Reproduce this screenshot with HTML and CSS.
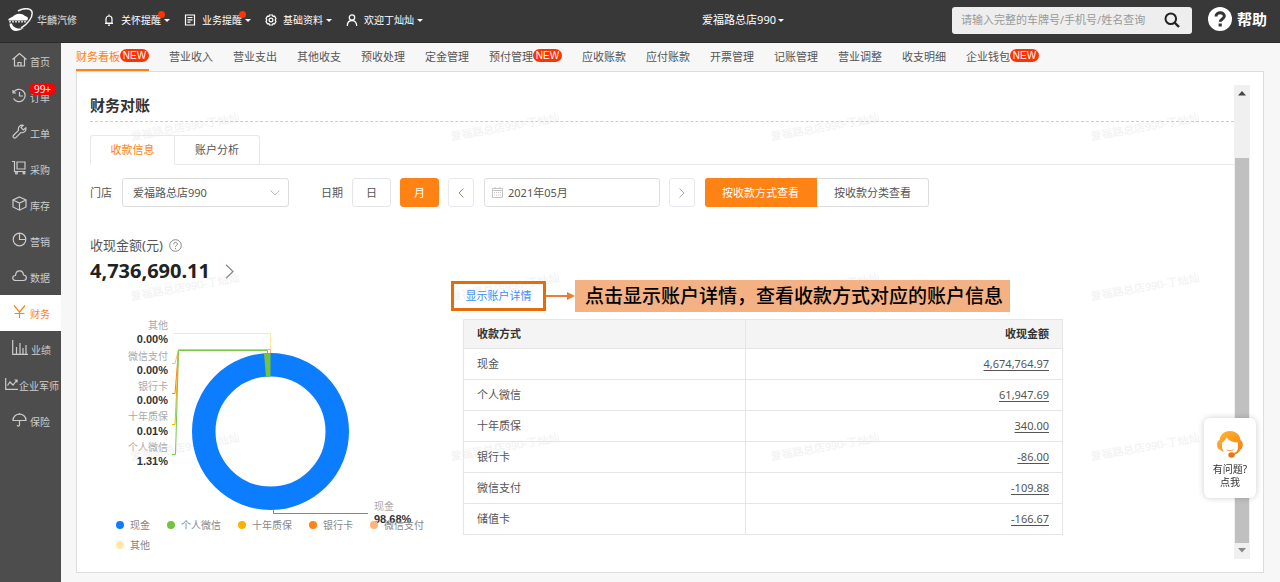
FILE: index.html
```
<!DOCTYPE html>
<html lang="zh-CN">
<head>
<meta charset="utf-8">
<title>财务看板</title>
<link rel="stylesheet" href="styles.css">
</head>
<body>
<header class="topbar">
  <a class="logo" href="#">
    <svg width="26" height="24" viewBox="0 0 26 24" fill="none">
      <path d="M10 3C16-.5 23 0 24 4c1 5-4 12-11 16" stroke="#f2f2f2" stroke-width="1.500"/>
      <path d="M0 12c1-2 3-2.500 5-3.500C8 5 14 5 17 8c2 .5 3 1 3 3l-1 1.500H1z" fill="#fff"/>
      <path d="M1 13.800h18" stroke="#ccc" stroke-width="1.400" stroke-dasharray="2 1"/>
      <path d="M1.500 15.500C2 23.500 8 25 16 20c-6 1.500-11 0-12-4.500z" fill="#fff"/>
    </svg>
    <span>华麟汽修</span>
  </a>
  <nav class="topmenu">
    <button class="menu-item" type="button">
      <svg width="12" height="12" viewBox="0 0 12 12" fill="none" stroke="#fff" stroke-width="1.200"><path d="M3 9V5a3 3 0 0 1 6 0v4zM2 9.500h8M5 11.200h2M6 .5v1.500"/></svg>
      <span class="menu-text">关怀提醒<i class="dot"></i></span><i class="caret"></i>
    </button>
    <button class="menu-item" type="button">
      <svg width="12" height="12" viewBox="0 0 12 12" fill="none" stroke="#fff" stroke-width="1.200"><path d="M1.500 1h9v10h-9zM3.500 3.500h5M3.500 5.800h5M3.500 8.200h3M1.500 1v10"/></svg>
      <span class="menu-text">业务提醒<i class="dot"></i></span><i class="caret"></i>
    </button>
    <button class="menu-item" type="button">
      <svg width="12" height="12" viewBox="0 0 12 12" fill="none" stroke="#fff" stroke-width="1.200"><path d="M4.500 1h3l.5 1.300 1.600-.2 1.400 2.500L10.200 6l.8 1.400-1.400 2.500-1.600-.2L7.500 11h-3L4 9.700l-1.600.2L1 7.400 1.800 6 1 4.600l1.400-2.500 1.600.2z"/><circle cx="6" cy="6" r="1.900"/></svg>
      <span class="menu-text">基础资料</span><i class="caret"></i>
    </button>
    <button class="menu-item" type="button">
      <svg width="12" height="12" viewBox="0 0 12 12" fill="none" stroke="#fff" stroke-width="1.300"><circle cx="6" cy="3.500" r="2.700"/><path d="M1.300 12c0-3.500 2-5.500 4.700-5.500s4.700 2 4.700 5.500"/></svg>
      <span class="menu-text">欢迎丁灿灿</span><i class="caret"></i>
    </button>
  </nav>
  <button class="store" type="button">爱福路总店990<i class="caret"></i></button>
  <form class="search">
    <input type="text" aria-label="查询" placeholder="请输入完整的车牌号/手机号/姓名查询">
    <button type="button" aria-label="搜索"><svg width="16" height="16" viewBox="0 0 16 16" fill="none" stroke="#222" stroke-width="2"><circle cx="6.800" cy="6.800" r="5.300"/><path d="M10.500 10.500l4.500 4.500" stroke-width="2.400"/></svg></button>
  </form>
  <a class="help" href="#">
    <svg width="24" height="24" viewBox="0 0 24 24"><circle cx="12" cy="12" r="12" fill="#fff"/><path d="M8 9.500C8 4.500 16.500 4.800 16.300 9.200 16.200 12 12.300 11.800 12.200 14.800" fill="none" stroke="#333" stroke-width="3"/><path d="M10.600 16.500h3.200v3h-3.200z" fill="#333"/></svg>
    <span>帮助</span>
  </a>
</header>
<div class="shell">
  <nav class="side">
    <a href="#"><svg width="15" height="15" viewBox="0 0 15 15"><path d="M.5 7.500l7-6 7 6M2.500 6.500v7.500h10V6.500M6 14v-3.500h3V14"/></svg><span>首页</span></a>
    <a href="#"><svg width="15" height="15" viewBox="0 0 15 15"><path d="M1.500 4.500a6.200 6.200 0 1 1 0 6M1 2v3h3M7.500 4v4h3.500"/></svg><span>订单</span><b class="count">99+</b></a>
    <a href="#"><svg width="15" height="15" viewBox="0 0 15 15"><path d="M1.300 11.500l5.200-5.200c-.8-3 1.500-5.800 4.700-5L9 3.600 11.300 6l2.500-2.200c.8 3-2 5.500-5 4.800l-5.100 5.200c-1.500 1-3.300-.8-2.400-2.300z"/></svg><span>工单</span></a>
    <a href="#"><svg width="15" height="15" viewBox="0 0 15 15"><path d="M0 1.500h2.500v10h11M5 2h8v7H5z"/><circle cx="4.500" cy="13" r="1"/><circle cx="12" cy="13" r="1"/></svg><span>采购</span></a>
    <a href="#"><svg width="15" height="15" viewBox="0 0 15 15"><path d="M7.500 1L14 4v7l-6.500 3.200L1 11V4zM1 4l6.500 3L14 4M7.500 7v7"/></svg><span>库存</span></a>
    <a href="#"><svg width="15" height="15" viewBox="0 0 15 15"><circle cx="7.500" cy="7.500" r="6.300"/><path d="M7.500 1v6.500h6"/></svg><span>营销</span></a>
    <a href="#"><svg width="15" height="15" viewBox="0 0 15 15"><path d="M4 12.500C-.5 12.500 0 7.500 3.500 7.500 4 1.500 11 1.500 11.500 7c3.800.3 3.800 5.500 0 5.500z"/></svg><span>数据</span></a>
    <a href="#" class="on"><svg width="15" height="15" viewBox="0 0 15 15"><path d="M2 1.500l5.500 6.500L13 1.500M7.500 8v6M2.500 9.500h10"/></svg><span>财务</span></a>
    <a href="#"><svg width="16" height="15" viewBox="0 0 16 15"><path d="M.7 0v14.300H16M4.500 7v7M8 3v11M11 8v6M14 5v9"/></svg><span>业绩</span></a>
    <a href="#" class="wide"><svg width="13" height="15" viewBox="0 0 13 15"><path d="M.7 2v11.300H13M2.500 9.500L5 6l3 3 4-5M9.500 4H12v2.500"/></svg><span>企业军师</span></a>
    <a href="#"><svg width="15" height="15" viewBox="0 0 15 15"><path d="M1 8.500C1 0 14 0 14 8.500zM7.500 8.500V13c0 1.500-2.200 1.500-2.200 0M7.500 1v1.500"/></svg><span>保险</span></a>
  </nav>
  <main class="main">
    <nav class="tabs">
      <a href="#" class="on">财务看板<b>NEW</b></a>
      <a href="#">营业收入</a>
      <a href="#">营业支出</a>
      <a href="#">其他收支</a>
      <a href="#">预收处理</a>
      <a href="#">定金管理</a>
      <a href="#">预付管理<b>NEW</b></a>
      <a href="#">应收账款</a>
      <a href="#">应付账款</a>
      <a href="#">开票管理</a>
      <a href="#">记账管理</a>
      <a href="#">营业调整</a>
      <a href="#">收支明细</a>
      <a href="#">企业钱包<b>NEW</b></a>
    </nav>
    <section class="panel">
      <div class="content">
        <div class="marks" aria-hidden="true">
          <span>爱福路总店990-丁灿灿</span><span>爱福路总店990-丁灿灿</span><span>爱福路总店990-丁灿灿</span><span>爱福路总店990-丁灿灿</span>
          <span>爱福路总店990-丁灿灿</span><span>爱福路总店990-丁灿灿</span><span>爱福路总店990-丁灿灿</span><span>爱福路总店990-丁灿灿</span>
          <span>爱福路总店990-丁灿灿</span><span>爱福路总店990-丁灿灿</span><span>爱福路总店990-丁灿灿</span><span>爱福路总店990-丁灿灿</span>
        </div>
        <h1>财务对账</h1>
        <div class="subtabs">
          <button type="button" class="on">收款信息</button>
          <button type="button">账户分析</button>
        </div>
        <form class="filters">
          <label for="shop">门店</label>
          <div class="select">
            <select id="shop"><option>爱福路总店990</option></select>
            <svg width="10" height="6" viewBox="0 0 10 6" fill="none" stroke="#bbb"><path d="M.5.5L5 5 9.500.5"/></svg>
          </div>
          <label for="month" class="date-label">日期</label>
          <button type="button" class="unit">日</button>
          <button type="button" class="unit on">月</button>
          <button type="button" class="step" aria-label="上月"><svg width="6" height="10" viewBox="0 0 6 10" fill="none" stroke="#888"><path d="M5.500.5L1 5l4.500 4.500"/></svg></button>
          <div class="date">
            <svg width="11" height="11" viewBox="0 0 11 11" fill="none" stroke="#c4c4c4"><path d="M.5 1.500h10v9H.5zM.5 3.500h10M3 0v2M8 0v2"/><path d="M2 5.500h7M2 8h7" stroke-dasharray="1 1"/></svg>
            <input id="month" type="text" value="2021年05月">
          </div>
          <button type="button" class="step" aria-label="下月"><svg width="6" height="10" viewBox="0 0 6 10" fill="none" stroke="#aaa"><path d="M.5.5L5 5 .5 9.500"/></svg></button>
          <div class="modes">
            <button type="button" class="on">按收款方式查看</button>
            <button type="button">按收款分类查看</button>
          </div>
        </form>
        <div class="total-label">收现金额(元)
          <svg width="13" height="13" viewBox="0 0 13 13" fill="none" stroke="#888"><circle cx="6.500" cy="6.500" r="5.800"/><path d="M4.700 5.200c0-2.500 3.700-2.400 3.700-.1 0 1.500-1.900 1.300-1.900 3M6.500 9v1.200"/></svg>
        </div>
        <div class="total">4,736,690.11
          <svg width="9" height="15" viewBox="0 0 9 15" fill="none" stroke="#888" stroke-width="1.200"><path d="M1 .7l7 6.800-7 6.800"/></svg>
        </div>
        <div class="report">
          <div class="chart">
            <svg class="donut" viewBox="0 0 361 200" role="img" aria-label="收款方式占比">
              <circle cx="180.500" cy="116.500" r="66.750" fill="none" stroke="#0d7dff" stroke-width="23.500"/>
              <path d="M174 38.300L180.500 38V61.500L176 61.700z" fill="#73c341"/>
              <g fill="none">
                <path d="M83 18.500h97.500V38" stroke="#ffe9a8"/>
                <path d="M82 48.500h3L88.500 34.500h92V38" stroke="#ffb47a"/>
                <path d="M82 78.500h3L88.500 35" stroke="#ff8214"/>
                <path d="M82 109.500h3L88.500 35" stroke="#fab400"/>
                <path d="M82 139.500h3.500L88.500 35.500h89V38" stroke="#7cc84b"/>
                <path d="M183.500 195v3.500H278" stroke="#3d95ff"/>
              </g>
              <g class="name" text-anchor="end">
                <text x="78" y="14">其他</text>
                <text x="78" y="45">微信支付</text>
                <text x="78" y="75">银行卡</text>
                <text x="78" y="105">十年质保</text>
                <text x="78" y="136">个人微信</text>
              </g>
              <g class="share" text-anchor="end">
                <text x="78" y="28">0.00%</text>
                <text x="78" y="59">0.00%</text>
                <text x="78" y="89">0.00%</text>
                <text x="78" y="120">0.01%</text>
                <text x="78" y="150">1.31%</text>
              </g>
              <text class="name" x="284" y="195">现金</text>
              <text class="share" x="284" y="208">98.68%</text>
            </svg>
            <ul class="legend">
              <li class="cash">现金</li>
              <li class="wechat">个人微信</li>
              <li class="warranty">十年质保</li>
              <li class="card">银行卡</li>
              <li class="wxpay">微信支付</li>
              <li class="other">其他</li>
            </ul>
          </div>
          <div class="detail">
            <div class="callout">
              <a href="#" class="show">显示账户详情</a>
              <svg width="29" height="10" viewBox="0 0 29 10"><path d="M0 5h22" stroke="#ed7d31" stroke-width="2"/><path d="M21 1l8 4-8 4z" fill="#ed7d31"/></svg>
              <p>点击显示账户详情，查看收款方式对应的账户信息</p>
            </div>
            <table>
              <thead><tr><th>收款方式</th><th>收现金额</th></tr></thead>
              <tbody>
                <tr><td>现金</td><td><a href="#">4,674,764.97</a></td></tr>
                <tr><td>个人微信</td><td><a href="#">61,947.69</a></td></tr>
                <tr><td>十年质保</td><td><a href="#">340.00</a></td></tr>
                <tr><td>银行卡</td><td><a href="#">-86.00</a></td></tr>
                <tr><td>微信支付</td><td><a href="#">-109.88</a></td></tr>
                <tr><td>储值卡</td><td><a href="#">-166.67</a></td></tr>
              </tbody>
            </table>
          </div>
        </div>
      </div>
      <div class="scroll" aria-hidden="true">
        <svg width="8" height="5" viewBox="0 0 8 5"><path d="M0 4.500L4 0l4 4.500z" fill="#444"/></svg>
        <div class="thumb"></div>
        <svg width="8" height="5" viewBox="0 0 8 5"><path d="M0 0h8L4 4.500z" fill="#888"/></svg>
      </div>
    </section>
  </main>
</div>
<a class="ask" href="#">
  <svg width="28" height="28" viewBox="0 0 28 28">
    <defs><linearGradient id="hair" x1="0" y1="0" x2="1" y2="1"><stop offset="0" stop-color="#ffb935"/><stop offset="1" stop-color="#f97a0c"/></linearGradient></defs>
    <path d="M3.500 10C5-2 23-2 24.500 10c3 1.500 3 8 0 9.500-1 2.500-3.500 5-8 5.500v-1.500c3-.5 5.500-2.500 5.500-6V12.500c-5 0-9-1.500-11.500-5C9.500 10 8 11.500 6 12.500V16c0 2 .5 4 2 6-2-.5-3-1.500-4-2.500C.2 18.500 0 11.500 3.500 10z" fill="url(#hair)"/>
    <path d="M10.500 19.500c1.500 1.500 5 1.500 7 0" fill="none" stroke="#f9a040"/>
    <ellipse cx="15.500" cy="25" rx="3.200" ry="2.700" fill="#f4700c"/>
  </svg>
  <span>有问题?<br>点我</span>
</a>
</body>
</html>
```
FILE: styles.css
```
* { box-sizing: border-box; }
body {
  margin: 0;
  min-height: 100vh;
  display: flex;
  flex-direction: column;
  background: #f7f7f7;
  color: #555;
  font: 11px/16px "Noto Sans", "Noto Sans CJK SC", sans-serif;
}
a { color: inherit; text-decoration: none; }
button, input, select { font: inherit; color: inherit; margin: 0; }
button { background: none; border: 0; padding: 0; cursor: pointer; }
svg { flex: none; display: block; }

/* top bar */
.topbar {
  display: flex;
  align-items: center;
  height: 43px;
  padding: 0 13px 2px 8px;
  background: #383838;
  border-bottom: 1px solid #2b2b2b;
  color: #fff;
}
.logo { display: flex; align-items: center; gap: 3px; font-size: 10px; font-weight: 500; color: #ccc; }
.topmenu { display: flex; gap: 14px; margin-left: 26px; }
.menu-item { display: flex; align-items: center; font-size: 10px; }
.menu-text { position: relative; margin: 0 3px 0 6px; white-space: nowrap; }
.dot { position: absolute; top: -1px; right: -4px; width: 7px; height: 7px; border-radius: 50%; background: #ff3200; }
.caret { border: 3px solid transparent; border-top-color: #fff; border-bottom: 0; }
.store { display: flex; align-items: center; gap: 2px; margin-left: auto; margin-right: 168px; }
.search { display: flex; align-items: center; width: 240px; height: 27px; padding: 0 12px 0 9px; background: #eee; border-radius: 3px; }
.search input { flex: 1; min-width: 0; padding: 0; border: 0; outline: 0; background: none; color: #333; }
.search input::placeholder { color: #999; opacity: 1; }
.help { display: flex; align-items: center; gap: 5px; margin-left: 16px; padding-bottom: 3px; font-size: 15px; font-weight: 700; }

/* side menu */
.shell { flex: 1; display: flex; }
.side { flex: none; width: 61px; background: #4d4d4d; font-size: 10px; color: #ccc; }
.side a { position: relative; display: flex; align-items: center; gap: 3px; height: 36px; padding-left: 12px; white-space: nowrap; }
.side svg { margin-bottom: 3px; fill: none; stroke: currentColor; stroke-width: 1.2; }
.side span { padding-top: 2px; }
.side a.wide { gap: 1px; padding-left: 5px; }
.side a.on { background: #fff; color: #ff8214; }
.count { position: absolute; top: 4px; left: 29px; width: 27px; height: 12px; border-radius: 6px; background: #f00; color: #fff; font-weight: 400; line-height: 12px; text-align: center; }

/* main tabs */
.main { flex: 1; min-width: 0; display: flex; flex-direction: column; padding: 0 16px 9px 15px; }
.tabs { display: flex; gap: 20px; height: 28px; line-height: 28px; white-space: nowrap; }
.tabs a { display: flex; height: 28px; }
.tabs a.on { color: #ff8214; box-shadow: inset 0 -2px #ff8214; }
.tabs b { width: 29px; height: 13px; margin-top: 6px; border-radius: 7px; background: #ff3200; color: #fff; font: 400 10px/13px "Liberation Sans", sans-serif; text-align: center; }

/* panel */
.panel { flex: 1; display: flex; padding: 13px; background: #fff; border: 1px solid #ddd; }
.content { position: relative; flex: 1; min-width: 0; padding-top: 11px; }
.content > :not(.marks) { position: relative; }
.marks { position: absolute; inset: 14px 0 0 40px; padding-top: 20px; display: grid; grid-template-columns: repeat(4, 320px); grid-auto-rows: 160px; font: 11px/16px "Liberation Sans", "Noto Sans CJK SC", sans-serif; color: #f1f1f1; }
.marks span { justify-self: start; align-self: start; transform: rotate(-10deg); white-space: nowrap; }
h1 { margin: 0; padding-bottom: 7px; border-bottom: 1px dashed #ccc; font-size: 15px; line-height: 18px; color: #333; }
.subtabs { display: flex; margin-top: 13px; border-bottom: 1px solid #e8e8e8; }
.subtabs button { width: 85px; height: 29px; border: 1px solid #e8e8e8; border-bottom: 0; }
.subtabs button + button { border-left: 0; border-radius: 0 3px 0 0; }
.subtabs .on { height: 30px; margin-bottom: -1px; border-bottom: 1px solid #fff; border-radius: 3px 0 0 0; color: #ff8214; }

/* filters */
.filters { display: flex; align-items: center; height: 29px; margin-top: 13px; }
.select { position: relative; width: 167px; margin-left: 10px; }
.select select { width: 100%; height: 29px; padding: 0 10px; appearance: none; background: none; border: 1px solid #ddd; border-radius: 3px; }
.select svg { position: absolute; right: 9px; top: 12px; pointer-events: none; }
.date-label { margin-left: 32px; }
.unit { width: 39px; height: 29px; margin-left: 9px; border: 1px solid #e4e4ea; border-radius: 3px; }
.unit.on { background: #ff8214; border-color: #ff8214; color: #fff; }
.step { display: grid; place-items: center; width: 26px; height: 29px; margin-left: 9px; border: 1px solid #e8e8f0; border-radius: 3px; }
.date { display: flex; align-items: center; gap: 5px; width: 176px; height: 29px; margin-left: 10px; padding-left: 7px; border: 1px solid #ddd; border-radius: 3px; }
.date input { flex: 1; min-width: 0; padding: 0; border: 0; outline: 0; background: none; }
.modes { display: flex; margin-left: 10px; }
.modes button { width: 112px; height: 29px; border: 1px solid #ddd; border-left: 0; border-radius: 0 3px 3px 0; }
.modes .on { background: #ff8214; border-color: #ff8214; border-radius: 3px 0 0 3px; color: #fff; }

/* total */
.total-label { display: flex; align-items: center; gap: 6px; margin-top: 29px; font-size: 13px; line-height: 18px; }
.total { display: flex; align-items: center; gap: 15px; margin-top: 3px; font-size: 20px; line-height: 28px; font-weight: 700; color: #222; }

/* report */
.report { display: flex; margin-top: -5px; }
.chart { flex: 0 0 361px; padding-top: 35px; }
.donut { width: 100%; overflow: visible; }
.name { font-size: 10px; fill: #aaa; }
.share { font: 700 11px "Liberation Sans", sans-serif; fill: #333; }
.legend { display: flex; flex-wrap: wrap; column-gap: 17px; margin: 0; padding: 0 0 0 26px; list-style: none; font-size: 10px; line-height: 20px; color: #888; }
.legend li { display: flex; align-items: center; gap: 6px; }
.legend li::before { content: ""; width: 8px; height: 8px; border-radius: 50%; background: #0d7dff; }
.legend .wechat::before { background: #73c341; }
.legend .warranty::before { background: #fab400; }
.legend .card::before { background: #ff8214; }
.legend .wxpay::before { background: #ffb47a; }
.legend .other::before { background: #ffe9a8; }
.detail { flex: 0 1 612px; min-width: 0; }
.callout { display: flex; align-items: center; white-space: nowrap; }
.show { width: 95px; height: 30px; border: 3px solid #e46c0a; color: #3d8bff; line-height: 24px; text-align: center; }
.callout p { margin: 0; padding: 0 7px 0 10px; background: #f4b183; color: #000; font-size: 19px; line-height: 32px; font-weight: 500; }
table { width: calc(100% - 12px); height: 216px; margin: 7px 0 0 12px; table-layout: fixed; border-collapse: collapse; }
th, td { padding: 6px 13px; border: 1px solid #e6e6e6; text-align: left; }
th { background: #f4f4f4; color: #333; }
th:first-child { width: 47%; }
th:last-child, td:last-child { text-align: right; }
td a { text-decoration: underline; text-underline-offset: 2px; }

/* scrollbar */
.scroll { display: flex; flex-direction: column; align-items: center; justify-content: space-between; width: 16px; padding: 6px 0; background: #f0f0f0; }
.thumb { flex: 1; width: 14px; margin: 62px 0 5px; background: #c0c0c0; }

/* floating help */
.ask { position: fixed; right: 24px; bottom: 84px; width: 52px; height: 80px; padding-top: 12px; display: flex; flex-direction: column; align-items: center; gap: 5px; background: #fff; border-radius: 6px; box-shadow: 0 0 6px rgba(0, 0, 0, .2); font-size: 10px; line-height: 13px; text-align: center; color: #333; }
```
